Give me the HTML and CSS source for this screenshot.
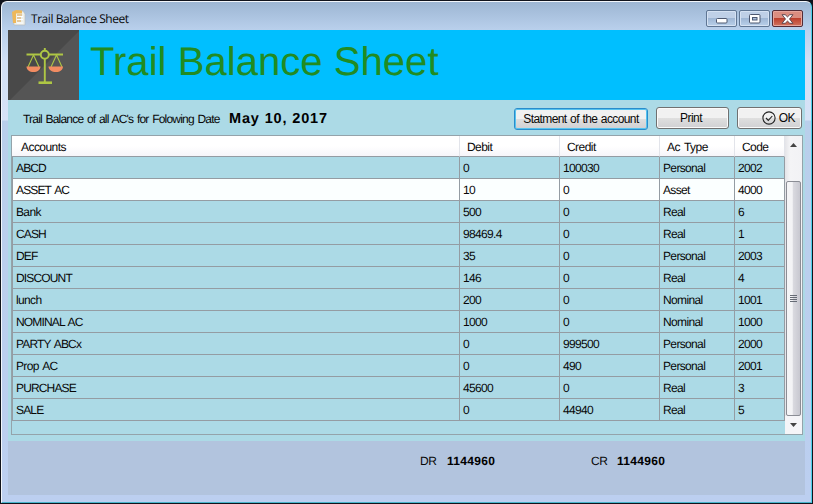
FILE: index.html
```html
<!DOCTYPE html>
<html lang="en">
<head>
<meta charset="utf-8">
<title>Trail Balance Sheet</title>
<link rel="stylesheet" href="styles.css">
</head>
<body>
<div class="window">
  <header class="titlebar">
    <svg class="app-icon" viewBox="0 0 14 16" width="14" height="16">
      <path d="M1 1h10l2 3v11H2z" fill="#eef0ea" stroke="#b8bcc0" stroke-width=".7"/>
      <path d="M0 2l4-2 6 .5v3H4V13H1z" fill="#eeb85a"/>
      <path d="M5 5h5M5 8h4M5 11h4" stroke="#d9a04c" stroke-width="1.2"/>
      <path d="M5 6.5h6M5 9.5h6M5 13h6" stroke="#fff" stroke-width="1"/>
    </svg>
    <span class="caption">Trail Balance Sheet</span>
    <div class="controls">
      <span class="control"><svg width="12" height="6" viewBox="0 0 12 6"><rect x=".5" y=".5" width="10.5" height="4.5" rx="1" fill="#fff" stroke="#4d5870"/></svg></span>
      <span class="control"><svg width="12" height="10" viewBox="0 0 12 10"><rect x=".5" y=".5" width="10.5" height="8.5" rx="1" fill="#fff" stroke="#4d5870"/><rect x="3.5" y="3.5" width="4.5" height="2.5" fill="#a9bedb" stroke="#4d5870"/></svg></span>
      <span class="control close"><svg width="13" height="10" viewBox="0 0 13 10"><path d="M1 .7h3.2l2.3 2.2L8.800.7H12L8.500 5 12 9.300H8.800L6.500 7.100 4.200 9.300H1L4.500 5z" fill="#fff" stroke="#54404a" stroke-width=".9"/></svg></span>
    </div>
  </header>
  <main class="client">
    <div class="banner">
      <svg class="logo" width="71" height="70" viewBox="0 0 71 70">
        <path d="M0 0h71v70H0z" fill="#494949"/>
        <path d="M71 1v69H2z" fill="#555"/>
        <g fill="none" stroke="#aec644" stroke-width="1.900">
          <path d="M18.500 24.500H33M41 24.500h14M36.800 18v3M36.800 29v23"/>
          <circle cx="36.800" cy="24.800" r="4"/>
          <path d="M25.500 25L20 37M25.500 25L31 37M48.500 25L43 37M48.500 25L54 37" stroke-width="1.100"/>
          <path d="M30.500 52.700h13.500" stroke-width="2.600"/>
        </g>
        <path d="M18.500 36.500h14c0 3.500-3 5.500-7 5.500s-7-2-7-5.500zM40.500 36.500h14.500c0 3.500-3 5.500-7 5.500s-7.500-2-7.500-5.500z" fill="#f28c62"/>
      </svg>
      <h1>Trail Balance Sheet</h1>
    </div>
    <div class="toolbar">
      <span class="prompt">Trail Balance of all AC's for Folowing Date</span>
      <strong class="date">May 10, 2017</strong>
      <button class="btn statement">Statment of the account</button>
      <button class="btn print">Print</button>
      <button class="btn ok"><svg width="14" height="14" viewBox="0 0 14 14" fill="none" stroke="#222" stroke-width="1.100"><circle cx="7" cy="7" r="6.100"/><path d="M4 7l2.300 2.400L10.300 5"/></svg>OK</button>
    </div>
    <div class="grid">
      <table>
        <colgroup><col class="c-name"><col class="c-num"><col class="c-num"><col class="c-type"><col class="c-code"></colgroup>
        <thead><tr><th>Accounts</th><th>Debit</th><th>Credit</th><th>Ac Type</th><th>Code</th></tr></thead>
        <tbody>
          <tr><td class="caps">ABCD</td><td>0</td><td>100030</td><td>Personal</td><td>2002</td></tr>
          <tr class="selected"><td class="caps">ASSET AC</td><td>10</td><td>0</td><td>Asset</td><td>4000</td></tr>
          <tr><td>Bank</td><td>500</td><td>0</td><td>Real</td><td>6</td></tr>
          <tr><td class="caps">CASH</td><td>98469.4</td><td>0</td><td>Real</td><td>1</td></tr>
          <tr><td class="caps">DEF</td><td>35</td><td>0</td><td>Personal</td><td>2003</td></tr>
          <tr><td class="caps">DISCOUNT</td><td>146</td><td>0</td><td>Real</td><td>4</td></tr>
          <tr><td>lunch</td><td>200</td><td>0</td><td>Nominal</td><td>1001</td></tr>
          <tr><td class="caps">NOMINAL AC</td><td>1000</td><td>0</td><td>Nominal</td><td>1000</td></tr>
          <tr><td class="caps">PARTY ABCx</td><td>0</td><td>999500</td><td>Personal</td><td>2000</td></tr>
          <tr><td>Prop AC</td><td>0</td><td>490</td><td>Personal</td><td>2001</td></tr>
          <tr><td class="caps">PURCHASE</td><td>45600</td><td>0</td><td>Real</td><td>3</td></tr>
          <tr><td class="caps">SALE</td><td>0</td><td>44940</td><td>Real</td><td>5</td></tr>
        </tbody>
      </table>
      <div class="scrollbar">
        <span class="arrow"><svg width="7" height="4" viewBox="0 0 7 4"><path d="M0 4L3.500 0 7 4z" fill="#444"/></svg></span>
        <span class="gap"></span>
        <span class="thumb"><i></i><i></i><i></i><i></i></span>
        <span class="arrow down"><svg width="7" height="4" viewBox="0 0 7 4"><path d="M0 0h7L3.500 4z" fill="#444"/></svg></span>
      </div>
    </div>
    <footer class="totals">
      <span class="label dr">DR</span><b>1144960</b>
      <span class="label cr">CR</span><b>1144960</b>
    </footer>
  </main>
</div>
</body>
</html>
```
FILE: styles.css
```css
* { box-sizing: border-box; }

body {
  margin: 0;
  width: 813px;
  height: 504px;
  overflow: hidden;
  background: #10131c;
  font: 12px "Liberation Sans", Arial, sans-serif;
  letter-spacing: -0.65px;
  text-rendering: geometricPrecision;
  color: #080808;
}

.window {
  width: 811px;
  height: 502px;
  margin: 1px 1px 1px;
  padding: 0 6px 7px;
  border: 1px solid #f2f6fb;
  border-right-color: #4dd0ea;
  border-bottom-color: #48b5cc;
  border-radius: 6px 6px 0 0;
  background: linear-gradient(#9db6d3 0, #b9d0ec 28px, #d2e0f5 60px, #d6e2f6 118px, #b9cfeb 119px, #bccff0 100%);
}

.titlebar {
  display: flex;
  height: 28px;
}

.app-icon { margin: 8px 5px 0 4px; }

.caption {
  font: 12px/16px "Open Sans", sans-serif;
  letter-spacing: -0.45px;
  margin-top: 9px;
}

.controls {
  display: flex;
  gap: 2px;
  margin: 8px 2px 0 auto;
}

.control {
  display: flex;
  align-items: center;
  justify-content: center;
  width: 31px;
  height: 17px;
  border: 1px solid #5f7694;
  border-radius: 2px;
  box-shadow: inset 0 0 0 1px #d5e2f3;
  background: linear-gradient(#bfd0e7 50%, #9fb7d5 50%, #b9d0ea);
}

.control:first-child { padding-top: 5px; }

.close {
  border-color: #532b36;
  box-shadow: inset 0 0 0 1px #e6a69c;
  background: linear-gradient(#db8d80 45%, #bd402d 50%, #d0735f);
}

.client {
  height: 465px;
  background: #acdae6;
}

.banner {
  display: flex;
  height: 70px;
  background: #00bfff;
}

.logo { display: block; flex: none; }

h1 {
  margin: 9px 0 0 11px;
  font: 40px/46px "Liberation Sans", Arial, sans-serif;
  letter-spacing: 0.05px;
  color: #228b22;
}

.toolbar {
  display: flex;
  height: 35px;
  padding-right: 3px;
}

.prompt {
  width: 206px;
  margin: 11px 0 0 15px;
  line-height: 16px;
  letter-spacing: -0.8px;
  word-spacing: 1.1px;
  white-space: nowrap;
}

.date {
  font: bold 14.5px/16px "Liberation Sans", Arial, sans-serif;
  letter-spacing: 0.85px;
  margin-top: 11px;
  color: #000;
}

.btn {
  height: 22px;
  margin-top: 7px;
  padding: 0 0 1px;
  border: 1px solid #707070;
  border-radius: 3px;
  box-shadow: inset 0 0 0 1px #fafafa;
  background: linear-gradient(#f1f1f1 48%, #dfdfdf 50%, #d0d0d3);
  font: inherit;
  letter-spacing: -0.5px;
  white-space: nowrap;
  color: #080808;
}

.statement {
  width: 134px;
  margin-left: auto;
  margin-top: 8px;
  padding: 0;
  border: 1px solid #2a8ccb;
  box-shadow: inset 0 0 0 1px #55c3ef;
  letter-spacing: -0.6px;
  word-spacing: 0.8px;
}

.print { width: 73px; margin-left: 8px; padding-right: 3px; }

.ok {
  display: flex;
  align-items: center;
  justify-content: flex-end;
  gap: 3px;
  width: 65px;
  margin-left: 8px;
  padding-right: 6px;
}

.grid {
  display: flex;
  width: 792px;
  height: 300px;
  margin-left: 3px;
  border: 1px solid #94a3aa;
}

table {
  width: 773px;
  height: 285px;
  table-layout: fixed;
  border-collapse: separate;
  border-spacing: 0;
}

.c-name { width: 448px; }
.c-num { width: 100px; }
.c-type { width: 75px; }
.c-code { width: 50px; }

th, td {
  padding: 0 0 0 3px;
  line-height: 16px;
  font-weight: normal;
  text-align: left;
  white-space: nowrap;
  word-spacing: 1.5px;
  border-right: 1px solid #949ca3;
  border-bottom: 1px solid #949ca3;
}

th {
  height: 21px;
  padding-left: 7px;
  padding-top: 2px;
  border-right-color: #e2e4ea;
  letter-spacing: -0.55px;
  background: linear-gradient(#fff 50%, #f6f5fa);
}

th:first-child { padding-left: 9px; }
td { height: 22px; padding-bottom: 1px; padding-top: 1px; }
td:first-child { border-left: 1px solid #949ca3; padding-left: 3px; }
.caps { letter-spacing: -0.85px; }
.selected td { background: #fbffff; }

.scrollbar {
  display: flex;
  flex-direction: column;
  width: 17px;
  background: linear-gradient(90deg, #e4e4e8, #f4f4f6 30%, #f2f2f5);
}

.arrow {
  display: flex;
  flex: none;
  align-items: center;
  justify-content: center;
  height: 17px;
}

.down { height: 18px; margin-top: auto; background: #f5f5f8; }
.gap { height: 28px; }

.thumb {
  display: flex;
  flex-direction: column;
  align-items: center;
  justify-content: center;
  gap: 1px;
  width: 15px;
  height: 235px;
  margin-left: 1px;
  border: 1px solid #8b8d95;
  border-radius: 2px;
  background: linear-gradient(90deg, #f4f4f6 0 40%, #d9d9df 50%, #c8c8d0);
}

.thumb i { width: 7px; height: 1px; background: #666b75; }

.totals {
  display: flex;
  height: 54px;
  margin-top: 6px;
  padding-top: 12px;
  line-height: 16px;
  background: #b2c4de;
}

.totals b {
  font: bold 12px/16px "Liberation Sans", Arial, sans-serif;
  letter-spacing: 0.3px;
  width: 144px;
  color: #000;
}

.label { width: 26px; letter-spacing: -0.5px; }
.dr { margin-left: 412px; width: 27px; }
```
